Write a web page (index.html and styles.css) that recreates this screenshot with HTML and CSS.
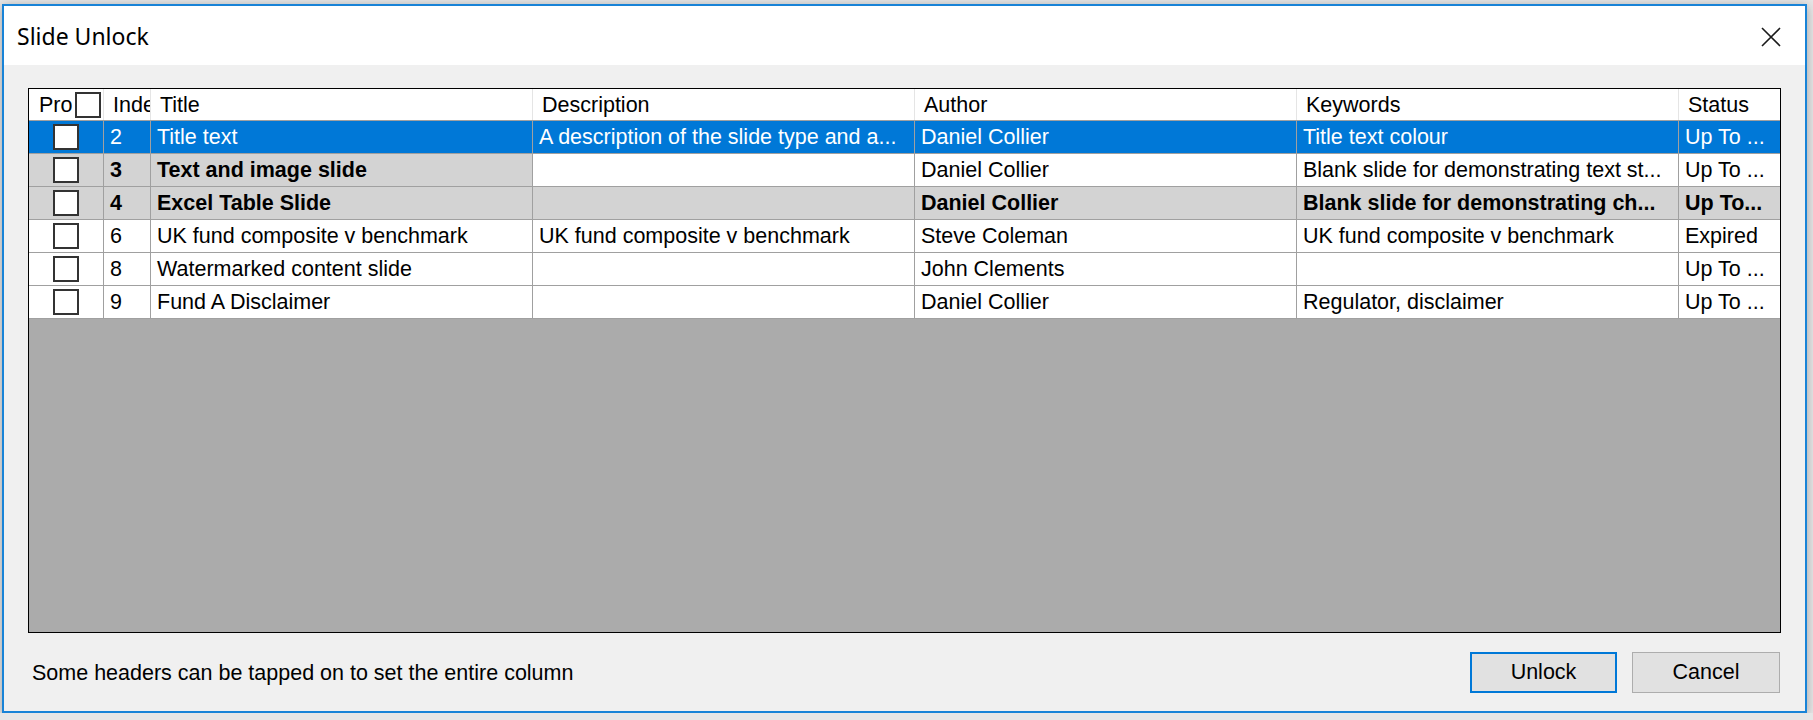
FILE: index.html
```html
<!DOCTYPE html>
<html lang="en">
<head>
    <meta charset="UTF-8">
    <title>Slide Unlock</title>
    <link rel="stylesheet" href="styles.css">
</head>
<body>
    <div class="window">
        <div class="titlebar">
            <span class="title">Slide Unlock</span>
            <svg class="close" width="20" height="20" viewBox="0 0 20 20">
                <path d="M1 1 L19 19 M19 1 L1 19" stroke="#1a1a1a" stroke-width="1.6" fill="none"/>
            </svg>
        </div>
        <div class="content">
            <div class="grid">
                <div class="row head">
                    <div class="cell pro-head"><span class="pro-label">Pro</span><span class="box"></span></div>
                    <div class="cell">Index</div>
                    <div class="cell">Title</div>
                    <div class="cell">Description</div>
                    <div class="cell">Author</div>
                    <div class="cell">Keywords</div>
                    <div class="cell last">Status</div>
                </div>
                <div class="row selected">
                    <div class="cell check"><span class="box"></span></div>
                    <div class="cell">2</div>
                    <div class="cell">Title text</div>
                    <div class="cell">A description of the slide type and a...</div>
                    <div class="cell">Daniel Collier</div>
                    <div class="cell">Title text colour</div>
                    <div class="cell last">Up To ...</div>
                </div>
                <div class="row">
                    <div class="cell check grey"><span class="box"></span></div>
                    <div class="cell grey bold">3</div>
                    <div class="cell grey bold">Text and image slide</div>
                    <div class="cell"></div>
                    <div class="cell">Daniel Collier</div>
                    <div class="cell">Blank slide for demonstrating text st...</div>
                    <div class="cell last">Up To ...</div>
                </div>
                <div class="row grey bold">
                    <div class="cell check"><span class="box"></span></div>
                    <div class="cell">4</div>
                    <div class="cell">Excel Table Slide</div>
                    <div class="cell"></div>
                    <div class="cell">Daniel Collier</div>
                    <div class="cell">Blank slide for demonstrating ch...</div>
                    <div class="cell last">Up To...</div>
                </div>
                <div class="row">
                    <div class="cell check"><span class="box"></span></div>
                    <div class="cell">6</div>
                    <div class="cell">UK fund composite v benchmark</div>
                    <div class="cell">UK fund composite v benchmark</div>
                    <div class="cell">Steve Coleman</div>
                    <div class="cell">UK fund composite v benchmark</div>
                    <div class="cell last">Expired</div>
                </div>
                <div class="row">
                    <div class="cell check"><span class="box"></span></div>
                    <div class="cell">8</div>
                    <div class="cell">Watermarked content slide</div>
                    <div class="cell"></div>
                    <div class="cell">John Clements</div>
                    <div class="cell"></div>
                    <div class="cell last">Up To ...</div>
                </div>
                <div class="row">
                    <div class="cell check"><span class="box"></span></div>
                    <div class="cell">9</div>
                    <div class="cell">Fund A Disclaimer</div>
                    <div class="cell"></div>
                    <div class="cell">Daniel Collier</div>
                    <div class="cell">Regulator, disclaimer</div>
                    <div class="cell last">Up To ...</div>
                </div>
            </div>
            <div class="footer">
                <span class="hint">Some headers can be tapped on to set the entire column</span>
                <div class="buttons">
                    <button class="btn default">Unlock</button>
                    <button class="btn">Cancel</button>
                </div>
            </div>
        </div>
    </div>
</body>
</html>
```

FILE: styles.css
```css
body {
    margin: 0;
    padding: 4px 0 0 2px;
    background-color: #e6e6e6;
    font-family: "Liberation Sans", Arial, sans-serif;
    overflow: hidden;
}
/* Dialog window */
.window {
    box-sizing: border-box;
    width: 1805px;
    height: 709px;
    border: 2px solid #1883d7;
    background-color: #f0f0f0;
    box-shadow: 0 2px 10px rgba(0, 0, 0, 0.3);
    display: flex;
    flex-direction: column;
}
.titlebar {
    height: 59px;
    background-color: white;
    display: flex;
    align-items: center;
    justify-content: space-between;
    padding: 0 24px 0 13px;
}
.title {
    font-family: "Noto Sans", sans-serif;
    font-size: 23px;
    color: #000;
}
.close {
    margin-top: 2px;
}
.content {
    padding: 23px 24px 18px 24px;
}
/* List view */
.grid {
    box-sizing: border-box;
    height: 545px;
    border: 1px solid #000;
    background-color: #ababab;
    font-size: 21.5px;
}
.row {
    display: grid;
    grid-template-columns: 75px 47px 382px 382px 382px 382px 101px;
    height: 33px;
    box-sizing: border-box;
    border-bottom: 1px solid #a0a0a0;
    background-color: white;
}
.cell {
    box-sizing: border-box;
    border-right: 1px solid #a0a0a0;
    padding-left: 6px;
    white-space: nowrap;
    overflow: hidden;
    line-height: 33px;
    color: #000;
}
.cell.last {
    border-right: none;
}
.row.head {
    height: 32px;
}
.row.head .cell {
    border-right-color: #e5e5e5;
    padding-left: 9px;
    line-height: 32px;
}
.pro-head {
    display: flex;
    align-items: center;
    padding-left: 10px !important;
}
.pro-label {
    display: inline-block;
    width: 36px;
    overflow: hidden;
}
.box {
    display: inline-block;
    box-sizing: border-box;
    width: 26px;
    height: 26px;
    border: 2px solid #333;
    background-color: white;
}
.cell.check {
    display: flex;
    align-items: center;
    justify-content: center;
    padding-left: 0;
}
.selected {
    background-color: #0078d7;
}
.selected .cell {
    color: white;
}
.grey {
    background-color: #d3d3d3;
}
.bold {
    font-weight: bold;
}
/* Bottom bar */
.footer {
    display: flex;
    justify-content: space-between;
    align-items: center;
    margin-top: 19px;
    height: 41px;
}
.hint {
    font-size: 21.5px;
    padding-left: 4px;
    margin-top: 2px;
    color: #000;
}
.buttons {
    display: flex;
    gap: 15px;
    padding-right: 1px;
}
.btn {
    box-sizing: border-box;
    width: 148px;
    height: 41px;
    background-color: #e1e1e1;
    border: 1px solid #adadad;
    font-family: "Liberation Sans", Arial, sans-serif;
    font-size: 21.5px;
    color: #000;
    padding: 0;
}
.btn.default {
    width: 147px;
    border: 2px solid #0078d7;
}
```
